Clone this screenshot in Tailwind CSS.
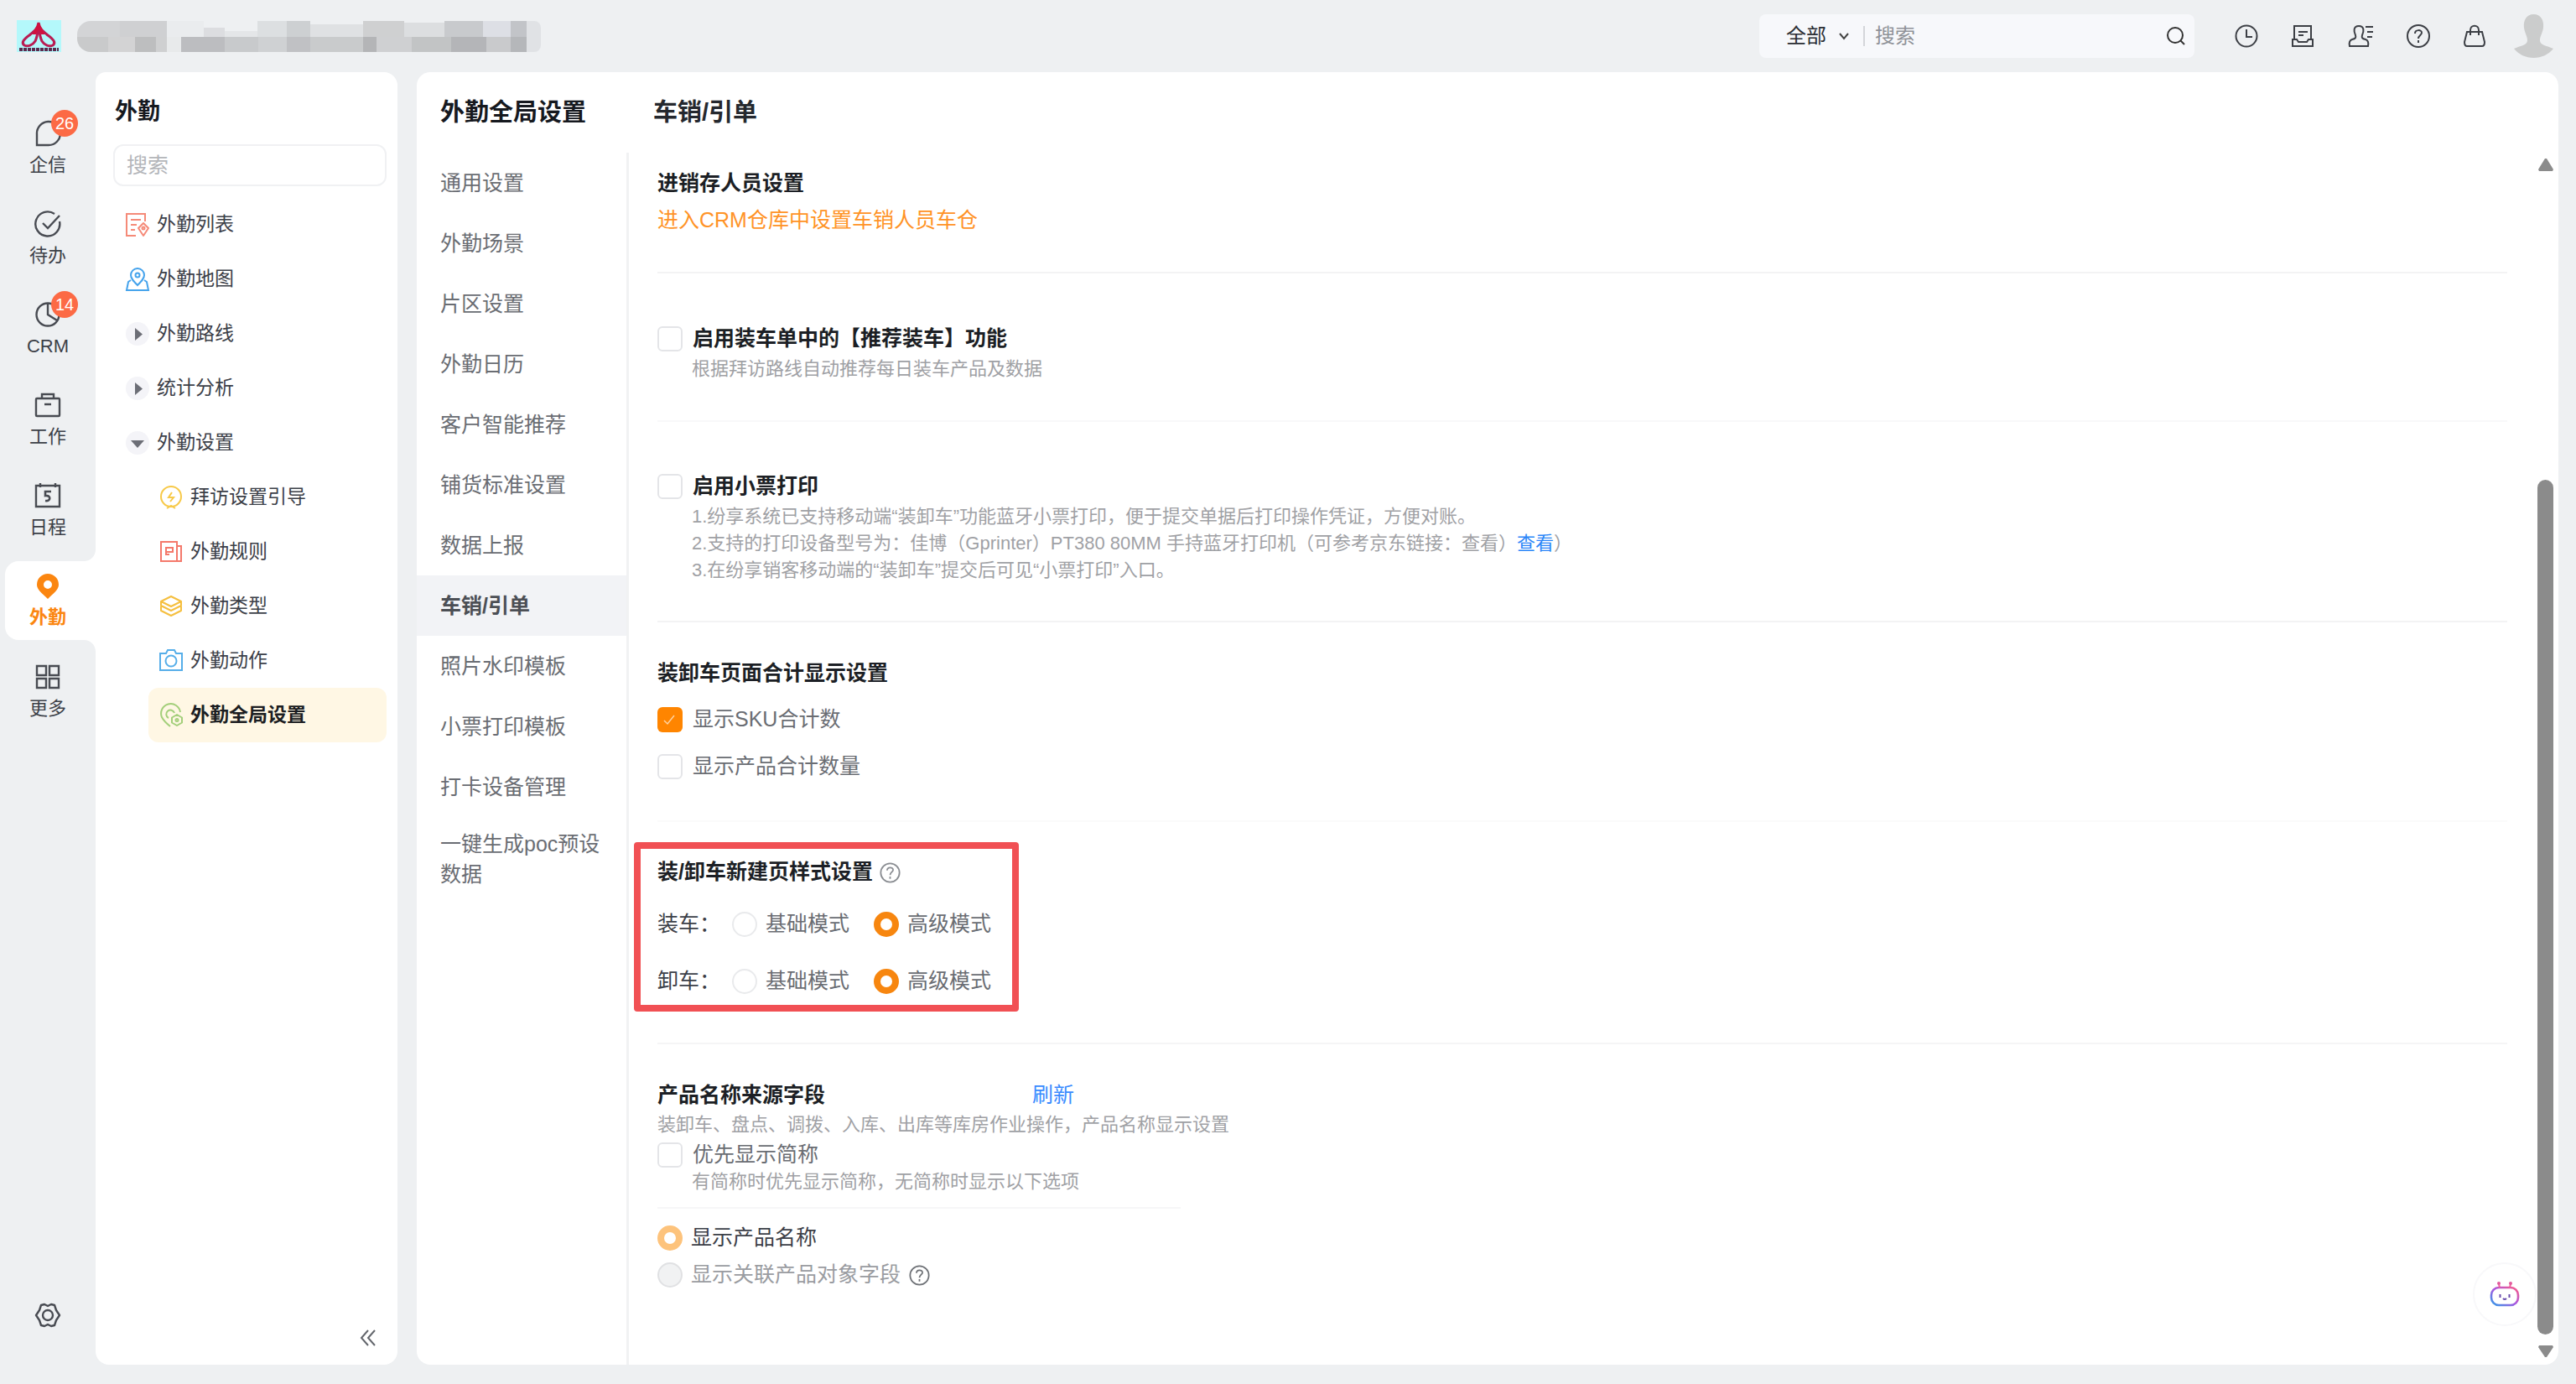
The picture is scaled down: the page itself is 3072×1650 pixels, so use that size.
<!doctype html>
<html lang="zh-CN">
    <head>
        <meta charset="UTF-8" />
        <meta name="viewport" content="width=device-width, initial-scale=1.0" />
        <title>外勤全局设置</title>
        <script src="https://cdn.jsdelivr.net/npm/@tailwindcss/browser@4"></script>
    </head>
    <body
        class="flex h-screen flex-col overflow-hidden bg-[#eef0f2] font-['Liberation_Sans','Noto_Sans_CJK_SC',sans-serif] text-[25px] text-[#3c4048]"
    >
        <!-- Top bar -->
        <header class="flex h-[86px] shrink-0 items-center pr-[27px] pl-5">
            <svg class="h-[38px] w-[53px]" viewBox="0 0 53 38">
                <rect width="53" height="38" fill="#b4f8fb" />
                <path
                    d="M26 3c-1 7-5 10-11 15-7 5-10 9-6 12 4 2 10 0 13-5 3-6 3-13 4-18 1 5 1 12 4 18 3 5 9 7 13 5 4-3 1-7-6-12C31 13 27 10 26 3z"
                    fill="none"
                    stroke="#b91c52"
                    stroke-width="3"
                />
                <path d="M26 3l-8 14h5l3-6 3 6h5z" fill="#d0123f" />
                <path d="M3 35h47" stroke="#5b2a4e" stroke-width="4" stroke-dasharray="4 1" />
            </svg>
            <!-- Masked company name -->
            <svg
                class="ml-[19px] h-[37px] w-[553px] rounded-lg rounded-l-2xl"
                viewBox="0 0 414 37"
                preserveAspectRatio="none"
                shape-rendering="crispEdges"
            >
                <path fill="#d3d4d6" d="M0 0h51v19H0z" />
                <path fill="#cfd0d2" d="M38 0h42v19H38z" />
                <path fill="#eaecee" d="M80 0h33v19H80z" />
                <path fill="#dcdde0" d="M113 8h19v11h-19z" />
                <path fill="#e4e6e8" d="M132 12h29v7h-29z" />
                <path fill="#dcdfe1" d="M161 0h26v19h-26z" />
                <path fill="#cdd0d2" d="M187 0h21v19h-21z" />
                <path fill="#dfe1e3" d="M208 4h47v15h-47z" />
                <path fill="#cfd0d1" d="M255 0h37v19h-37z" />
                <path fill="#dcdee0" d="M292 2h36v17h-36z" />
                <path fill="#c8cacd" d="M328 0h34v19h-34z" />
                <path fill="#dddfe5" d="M362 0h25v19h-25z" />
                <path fill="#c2c4c8" d="M387 0h14v19h-14z" />
                <path fill="#e0e2e5" d="M401 0h13v37h-13z" />
                <path fill="#c9cacb" d="M0 19h28v18H0z" />
                <path fill="#d3d3d4" d="M28 19h24v18H28z" />
                <path fill="#bdbebf" d="M52 19h18v18H52z" />
                <path fill="#cfd0d1" d="M70 19h10v18H70z" />
                <path fill="#e8eaeb" d="M80 19h13v18H80z" />
                <path fill="#bcbdc0" d="M93 19h39v18H93z" />
                <path fill="#c8cacc" d="M132 19h30v18h-30z" />
                <path fill="#cfd1d3" d="M162 19h25v18h-25z" />
                <path fill="#c0c1c4" d="M187 19h21v18h-21z" />
                <path fill="#c9cbcc" d="M208 19h47v18h-47z" />
                <path fill="#b4b5b7" d="M255 19h12v18h-12z" />
                <path fill="#cfd0d2" d="M267 19h32v18h-32z" />
                <path fill="#c2c4c5" d="M299 19h35v18h-35z" />
                <path fill="#b4b5b8" d="M334 19h31v18h-31z" />
                <path fill="#c9cacc" d="M365 19h22v18h-22z" />
                <path fill="#b5b7ba" d="M387 19h14v18h-14z" />
            </svg>

            <form class="ml-auto flex h-[52px] w-[519px] items-center rounded-lg bg-[#f7f8fb] pr-2 text-[24px]">
                <label class="relative flex items-center">
                    <select
                        aria-label="搜索范围"
                        class="w-[112px] appearance-none pl-8 text-[#2a2d33] outline-none"
                    >
                        <option>全部</option>
                    </select>
                    <svg class="absolute right-1 h-3.5 w-3.5" viewBox="0 0 14 14" fill="none" stroke="#444" stroke-width="2">
                        <path d="M2 4l5 6 5-6" />
                    </svg>
                </label>
                <span class="ml-3 h-6 w-0.5 bg-[#d4d6da]"></span>
                <input
                    type="text"
                    aria-label="全局搜索"
                    placeholder="搜索"
                    class="ml-3 min-w-0 flex-1 outline-none placeholder:text-[#8f9298]"
                />
                <button type="submit" aria-label="搜索" class="w-7">
                    <svg class="h-7 w-7" viewBox="0 0 28 28" fill="none" stroke="#333" stroke-width="2">
                        <circle cx="13" cy="13" r="9" />
                        <path d="M19 19l5 5" />
                    </svg>
                </button>
            </form>
            <nav class="ml-12 flex items-center gap-[39px]">
                <button aria-label="最近">
                    <svg class="h-7 w-7" viewBox="0 0 28 28" fill="none" stroke="#3c3f45" stroke-width="2">
                        <circle cx="14" cy="14" r="12.500" />
                        <path d="M14 6v9h7" />
                    </svg>
                </button>
                <button aria-label="文档">
                    <svg class="h-7 w-7" viewBox="0 0 28 28" fill="none" stroke="#3c3f45" stroke-width="2">
                        <path d="M4 18V2h20v16M9 9h11M9 13h6" />
                        <path d="M2 18h5l2 3h10l2-3h5v8H2z" />
                    </svg>
                </button>
                <button aria-label="联系人">
                    <svg class="h-7 w-8" viewBox="0 0 32 28" fill="none" stroke="#3c3f45" stroke-width="2">
                        <path
                            d="M10 13c-2-4-3-11 4-11s6 7 4 11c-1 3 0 4 4 5 3 1 4 3 3 8H3c-1-5 0-7 3-8 4-1 5-2 4-5z"
                        />
                        <path d="M22 3h9M24 9h7M24 15h6" />
                    </svg>
                </button>
                <button aria-label="帮助">
                    <svg class="h-7 w-7" viewBox="0 0 28 28" fill="none" stroke="#3c3f45" stroke-width="2">
                        <circle cx="14" cy="14" r="13" />
                        <path d="M10 11c0-5 8-5 8-1 0 3-4 3-4 7M14 19v3" />
                    </svg>
                </button>
                <button aria-label="应用市场">
                    <svg class="h-7 w-7" viewBox="0 0 28 28" fill="none" stroke="#3c3f45" stroke-width="2">
                        <path d="M5 9h18l3 12c0 4-1 5-3 5H5c-2 0-3-1-3-5z" />
                        <path d="M9 13V7c0-7 10-7 10 0v6" />
                    </svg>
                </button>
            </nav>
            <svg class="ml-[33px] h-[52px] w-[47px]" viewBox="0 0 47 52" fill="#cbcccc">
                <path
                    d="M23.500 0C32 0 36 7 35 16c-1 7-4 10-4 15 0 6 7 6 16 10-6 7-14 11-23.500 11S6 48 0 41c9-4 16-4 16-10 0-5-3-8-4-15C11 7 15 0 23.500 0z"
                />
            </svg>
        </header>

        <div class="flex min-h-0 flex-1 pr-[21px] pb-[23px]">
            <!-- Rail -->
            <nav class="flex w-[114px] shrink-0 flex-col pt-[45px] text-[22px] leading-7">
                <a href="#" class="flex h-[108px] flex-col items-center pt-3">
                    <span class="relative">
                        <svg class="h-8 w-8" viewBox="0 0 32 32" fill="none" stroke="#484b52" stroke-width="2.4">
                            <path d="M3 30V17A14 14 0 1 1 17 30z" />
                        </svg>
                        <span
                            class="absolute -top-3 left-5 flex h-8 w-8 items-center justify-center rounded-full bg-[#fc6a45] text-[20px] text-white"
                            >26</span
                        >
                    </span>
                    <span class="mt-2">企信</span>
                </a>
                <a href="#" class="flex h-[108px] flex-col items-center pt-3">
                    <svg class="h-8 w-8" viewBox="0 0 32 32" fill="none" stroke="#484b52" stroke-width="2.4">
                        <path d="M24 4A14.500 14.500 0 1 0 30 13M10 15l6 6L30 6" />
                    </svg>
                    <span class="mt-2">待办</span>
                </a>
                <a href="#" class="flex h-[108px] flex-col items-center pt-3">
                    <span class="relative">
                        <svg class="h-8 w-8" viewBox="0 0 32 32" fill="none" stroke="#484b52" stroke-width="2.4">
                            <circle cx="16" cy="16" r="13.500" />
                            <path d="M16 2v14l11 7" />
                        </svg>
                        <span
                            class="absolute -top-3 left-5 flex h-8 w-8 items-center justify-center rounded-full bg-[#fc6a45] text-[20px] text-white"
                            >14</span
                        >
                    </span>
                    <span class="mt-2">CRM</span>
                </a>
                <a href="#" class="flex h-[108px] flex-col items-center pt-3">
                    <svg class="h-8 w-8" viewBox="0 0 32 32" fill="none" stroke="#484b52" stroke-width="2.4">
                        <rect x="2" y="8" width="28" height="21" rx="1" />
                        <path d="M9 8V3h14v5M12 15h8" />
                    </svg>
                    <span class="mt-2">工作</span>
                </a>
                <a href="#" class="flex h-[106px] flex-col items-center pt-3">
                    <svg class="h-8 w-8" viewBox="0 0 32 32" fill="none" stroke="#484b52" stroke-width="2.4">
                        <path d="M2 4h28v25H2zM7 1v5M25 1v5" />
                        <path d="M20 11h-7v5c7-1 7 7 0 6" stroke-width="2.600" />
                    </svg>
                    <span class="mt-2">日程</span>
                </a>
                <a
                    href="#"
                    class="relative ml-1.5 flex h-[94px] flex-col items-center rounded-l-2xl bg-white pt-3.5 pr-1.5 font-bold text-[#fb8610]"
                >
                    <svg class="absolute right-0 bottom-full h-3.5 w-3.5" viewBox="0 0 14 14" fill="#fff">
                        <path d="M14 0v14H0c8 0 14-6 14-14z" />
                    </svg>
                    <svg class="absolute top-full right-0 h-3.5 w-3.5" viewBox="0 0 14 14" fill="#fff">
                        <path d="M14 14V0H0c8 0 14 6 14 14z" />
                    </svg>
                    <svg class="h-8 w-8" viewBox="0 0 32 32" fill="#fb8610">
                        <path
                            fill-rule="evenodd"
                            d="M16 1a13 13 0 0 1 13 13c0 6-6 10-13 17C9 24 3 20 3 14A13 13 0 0 1 16 1zm0 8a5 5 0 1 0 0 10 5 5 0 0 0 0-10z"
                        />
                    </svg>
                    <span class="mt-[7px]">外勤</span>
                </a>
                <a href="#" class="mt-4 flex flex-col items-center pt-3">
                    <svg class="h-8 w-8" viewBox="0 0 32 32" fill="none" stroke="#484b52" stroke-width="2.4">
                        <path d="M3 3h11v11H3zM18 3h11v11H18zM3 18h11v11H3zM18 18h11v11H18z" />
                    </svg>
                    <span class="mt-2">更多</span>
                </a>
                <button aria-label="设置" class="mt-auto mb-[43px] self-center">
                    <svg class="h-8 w-8" viewBox="0 0 32 32" fill="none" stroke="#484b52" stroke-width="2.4">
                        <path
                            d="M2 16l4-6 2-6 4-1 4 2 4-2 4 1 2 6 4 6-4 6-2 6-4 1-4-2-4 2-4-1-2-6z"
                            stroke-linejoin="round"
                        />
                        <circle cx="16" cy="16" r="6" />
                    </svg>
                </button>
            </nav>

            <!-- Module tree -->
            <aside class="flex w-[360px] shrink-0 flex-col rounded-2xl rounded-tl-xl bg-white px-[13px] pt-[26px] pl-[21px]">
                <h2 class="pl-0.5 text-[27px] leading-[42px] font-bold text-[#16191f]">外勤</h2>
                <input
                    type="text"
                    aria-label="搜索菜单"
                    placeholder="搜索"
                    class="mt-[18px] h-[50px] w-full rounded-xl border-2 border-[#f0f1f3] px-3.5 outline-none placeholder:text-[#b4b6ba]"
                />
                <ul class="mt-[13px] text-[23px]">
                    <li>
                        <a href="#" class="flex h-[65px] items-center gap-2 pl-3.5">
                            <svg class="h-[30px] w-[30px]" viewBox="0 0 30 30" fill="none" stroke="#f58a78" stroke-width="2">
                                <path d="M13 28H2V2h22v9M7 9h12M7 15h7M7 21h5" />
                                <path d="M22 13l6 6-6 9-6-9z" stroke-linejoin="round" />
                                <circle cx="22" cy="19" r="1.500" />
                            </svg>
                            外勤列表
                        </a>
                    </li>
                    <li>
                        <a href="#" class="flex h-[65px] items-center gap-2 pl-3.5">
                            <svg class="h-[30px] w-[30px]" viewBox="0 0 30 30" fill="none" stroke="#45a3ec" stroke-width="2">
                                <path d="M15 22c-5-5-8-8-8-12a8 8 0 0 1 16 0c0 4-3 7-8 12z" />
                                <circle cx="15" cy="10" r="2.500" />
                                <path d="M7 16l-3 2-2 10h26l-2-10-3-2" />
                            </svg>
                            外勤地图
                        </a>
                    </li>
                    <li>
                        <a href="#" class="flex h-[65px] items-center gap-2 pl-3.5">
                            <svg class="h-[30px] w-[30px]" viewBox="0 0 30 30">
                                <circle cx="15" cy="15" r="14" fill="#f4f4f8" />
                                <path d="M12 8v15l9-7.500z" fill="#6c6e76" />
                            </svg>
                            外勤路线
                        </a>
                    </li>
                    <li>
                        <a href="#" class="flex h-[65px] items-center gap-2 pl-3.5">
                            <svg class="h-[30px] w-[30px]" viewBox="0 0 30 30">
                                <circle cx="15" cy="15" r="14" fill="#f4f4f8" />
                                <path d="M12 8v15l9-7.500z" fill="#6c6e76" />
                            </svg>
                            统计分析
                        </a>
                    </li>
                    <li>
                        <a href="#" class="flex h-[65px] items-center gap-2 pl-3.5">
                            <svg class="h-[30px] w-[30px]" viewBox="0 0 30 30">
                                <circle cx="15" cy="15" r="14" fill="#f4f4f8" />
                                <path d="M7 12h16l-8 9z" fill="#6c6e76" />
                            </svg>
                            外勤设置
                        </a>
                        <ul class="pl-[42px]">
                            <li>
                                <a href="#" class="flex h-[65px] items-center gap-2 pl-3">
                                    <svg class="h-[30px] w-[30px]" viewBox="0 0 30 30" fill="none" stroke="#f7c948" stroke-width="2">
                                        <circle cx="15" cy="14" r="12" />
                                        <path d="M16 9l-4 6h6l-4 5M10 28l5-3 5 3" />
                                    </svg>
                                    拜访设置引导
                                </a>
                            </li>
                            <li>
                                <a href="#" class="flex h-[65px] items-center gap-2 pl-3">
                                    <svg class="h-[30px] w-[30px]" viewBox="0 0 30 30" fill="none" stroke="#f4796b" stroke-width="2">
                                        <path d="M3 3h19v23H3zM22 8h5v18h-5M9 10h8v5H9M9 18h4M9 9v10" />
                                    </svg>
                                    外勤规则
                                </a>
                            </li>
                            <li>
                                <a href="#" class="flex h-[65px] items-center gap-2 pl-3">
                                    <svg class="h-[30px] w-[30px]" viewBox="0 0 30 30" fill="none" stroke="#f5bf3f" stroke-width="2">
                                        <path d="M15 3l12 6-12 6L3 9zM3 9v5l12 6 12-6V9M3 15v5l12 6 12-6v-5" stroke-linejoin="round" />
                                    </svg>
                                    外勤类型
                                </a>
                            </li>
                            <li>
                                <a href="#" class="flex h-[65px] items-center gap-2 pl-3">
                                    <svg class="h-[30px] w-[30px]" viewBox="0 0 30 30" fill="none" stroke="#56aee9" stroke-width="2">
                                        <path d="M2 6h7l2-4h8l2 4h7v20H2z" />
                                        <circle cx="15" cy="15" r="6.500" />
                                    </svg>
                                    外勤动作
                                </a>
                            </li>
                            <li>
                                <a
                                    href="#"
                                    class="flex h-[65px] items-center gap-2 rounded-xl bg-[#fff7e4] pl-3 font-bold text-[#1c1e22]"
                                >
                                    <svg class="h-[30px] w-[30px]" viewBox="0 0 30 30" fill="none" stroke="#a3cf7a" stroke-width="2">
                                        <path d="M26 11A11.500 11.500 0 1 0 4 17c2 4 5 7 10 11" />
                                        <path d="M19 12a5 5 0 1 0-7 6" />
                                        <path d="M22 14l6 3.500v6L22 27l-6-3.500v-6z" stroke-linejoin="round" />
                                        <circle cx="22" cy="20.500" r="1.500" />
                                    </svg>
                                    外勤全局设置
                                </a>
                            </li>
                        </ul>
                    </li>
                </ul>
                <button aria-label="收起" class="mt-auto mr-3 mb-[22px] self-end">
                    <svg class="h-5 w-5" viewBox="0 0 20 20" fill="none" stroke="#63666c" stroke-width="2">
                        <path d="M10 1l-8 9 8 9M18 1l-8 9 8 9" />
                    </svg>
                </button>
            </aside>

            <!-- Settings panel -->
            <main class="relative ml-[23px] flex min-w-0 flex-1 flex-col rounded-2xl bg-white">
                <div class="flex h-24 shrink-0 items-center pt-0.5 text-[29px] font-bold text-[#16191f]">
                    <h1 class="w-[254px] pl-7">外勤全局设置</h1>
                    <h2 class="pl-7 text-[#25282e]">车销/引单</h2>
                </div>

                <div class="flex min-h-0 flex-1">
                    <nav class="w-[253px] shrink-0 border-r-3 border-[#f1f2f3] leading-9 text-[#6a6d73]">
                        <a href="#" class="flex h-[72px] items-center pl-7">通用设置</a>
                        <a href="#" class="flex h-[72px] items-center pl-7">外勤场景</a>
                        <a href="#" class="flex h-[72px] items-center pl-7">片区设置</a>
                        <a href="#" class="flex h-[72px] items-center pl-7">外勤日历</a>
                        <a href="#" class="flex h-[72px] items-center pl-7">客户智能推荐</a>
                        <a href="#" class="flex h-[72px] items-center pl-7">铺货标准设置</a>
                        <a href="#" class="flex h-[72px] items-center pl-7">数据上报</a>
                        <a
                            href="#"
                            class="flex h-[72px] items-center bg-[#f2f3f6] pl-7 font-bold text-[#4c4f55]"
                            >车销/引单</a
                        >
                        <a href="#" class="flex h-[72px] items-center pl-7">照片水印模板</a>
                        <a href="#" class="flex h-[72px] items-center pl-7">小票打印模板</a>
                        <a href="#" class="flex h-[72px] items-center pl-7">打卡设备管理</a>
                        <a href="#" class="block py-3.5 pr-5 pl-7">一键生成poc预设数据</a>
                    </nav>

                    <div class="min-w-0 flex-1 pr-9 pl-[34px]">
                        <section class="border-b-2 border-[#f3f3f4] pt-3.5 pb-10 leading-[44px]">
                            <h3 class="font-bold text-[#1c1f25]">进销存人员设置</h3>
                            <a href="#" class="block text-[#ff9326]">进入CRM仓库中设置车销人员车仓</a>
                        </section>

                        <section class="border-b-2 border-[#f8f8f9] pt-[58px] pb-[45px]">
                            <div class="flex h-10 items-center gap-3">
                                <input
                                    id="recommend"
                                    type="checkbox"
                                    class="h-[30px] w-[30px] appearance-none rounded-md border-2 border-[#e4e5e8]"
                                />
                                <label for="recommend" class="font-bold text-[#1c1f25]">启用装车单中的【推荐装车】功能</label>
                            </div>
                            <p class="pl-[41px] text-[22px] leading-8 text-[#9fa1a5]">
                                根据拜访路线自动推荐每日装车产品及数据
                            </p>
                        </section>

                        <section class="border-b-2 border-[#f3f3f4] pt-[57px] pb-11">
                            <div class="flex h-10 items-center gap-3">
                                <input
                                    id="receipt"
                                    type="checkbox"
                                    class="h-[30px] w-[30px] appearance-none rounded-md border-2 border-[#e4e5e8]"
                                />
                                <label for="receipt" class="font-bold text-[#1c1f25]">启用小票打印</label>
                            </div>
                            <div class="pl-[41px] text-[22px] leading-8 text-[#9fa1a5]">
                                <p>1.纷享系统已支持移动端“装卸车”功能蓝牙小票打印，便于提交单据后打印操作凭证，方便对账。</p>
                                <p>
                                    2.支持的打印设备型号为：佳博（Gprinter）PT380 80MM 手持蓝牙打印机（可参考京东链接：查看）<a
                                        href="#"
                                        class="text-[#2b86f8]"
                                        >查看</a
                                    >）
                                </p>
                                <p>3.在纷享销客移动端的“装卸车”提交后可见“小票打印”入口。</p>
                            </div>
                        </section>

                        <section class="border-b-2 border-[#fbfbfb] pt-10 pb-9">
                            <h3 class="mb-2 leading-10 font-bold text-[#1c1f25]">装卸车页面合计显示设置</h3>
                            <div class="flex h-14 items-center gap-3 text-[#6a6d73]">
                                <span class="relative flex">
                                    <input
                                        id="sku"
                                        type="checkbox"
                                        checked
                                        class="h-[30px] w-[30px] appearance-none rounded-md bg-[#ff8500]"
                                    />
                                    <svg
                                        class="pointer-events-none absolute inset-0"
                                        viewBox="0 0 30 30"
                                        fill="none"
                                        stroke="#ffd3a1"
                                        stroke-width="1.500"
                                    >
                                        <path d="M8 16l4 4 8-10" />
                                    </svg>
                                </span>
                                <label for="sku">显示SKU合计数</label>
                            </div>
                            <div class="flex h-14 items-center gap-3 text-[#6a6d73]">
                                <input
                                    id="quantity"
                                    type="checkbox"
                                    class="h-[30px] w-[30px] appearance-none rounded-md border-2 border-[#e4e5e8]"
                                />
                                <label for="quantity">显示产品合计数量</label>
                            </div>
                        </section>

                        <section class="border-b-2 border-[#f5f5f6] pt-6 pb-[37px]">
                            <div class="-ml-7 w-[459px] rounded border-8 border-[#f15054] pt-2 pb-2 pl-5">
                                <h3 class="mb-[22px] flex h-10 items-center gap-2 font-bold text-[#1c1f25]">
                                    装/卸车新建页样式设置
                                    <svg class="h-[25px] w-[25px]" viewBox="0 0 28 28" fill="none" stroke="#8a8d92" stroke-width="2">
                                        <circle cx="14" cy="14" r="12.500" />
                                        <path d="M10 11c0-5 8-5 8-1 0 3-4 3-4 7M14 19v3" />
                                    </svg>
                                </h3>
                                <div class="mb-7 flex h-10 items-center" role="radiogroup" aria-label="装车">
                                    <span class="w-[89px]">装车：</span>
                                    <label class="flex items-center gap-2.5 text-[#6a6d73]">
                                        <input
                                            type="radio"
                                            name="load"
                                            class="h-[30px] w-[30px] appearance-none rounded-full border-2 border-[#e9eaec]"
                                        />
                                        基础模式
                                    </label>
                                    <label class="ml-[29px] flex items-center gap-2.5 text-[#6a6d73]">
                                        <input
                                            type="radio"
                                            name="load"
                                            checked
                                            class="h-[30px] w-[30px] appearance-none rounded-full border-8 border-[#f7860f]"
                                        />
                                        高级模式
                                    </label>
                                </div>
                                <div class="flex h-10 items-center" role="radiogroup" aria-label="卸车">
                                    <span class="w-[89px]">卸车：</span>
                                    <label class="flex items-center gap-2.5 text-[#6a6d73]">
                                        <input
                                            type="radio"
                                            name="unload"
                                            class="h-[30px] w-[30px] appearance-none rounded-full border-2 border-[#e9eaec]"
                                        />
                                        基础模式
                                    </label>
                                    <label class="ml-[29px] flex items-center gap-2.5 text-[#6a6d73]">
                                        <input
                                            type="radio"
                                            name="unload"
                                            checked
                                            class="h-[30px] w-[30px] appearance-none rounded-full border-8 border-[#f7860f]"
                                        />
                                        高级模式
                                    </label>
                                </div>
                            </div>
                        </section>

                        <section class="pt-10">
                            <div class="flex leading-10">
                                <h3 class="w-[447px] font-bold text-[#1c1f25]">产品名称来源字段</h3>
                                <button class="text-[#3a8bff]">刷新</button>
                            </div>
                            <p class="text-[22px] leading-8 text-[#9fa1a5]">
                                装卸车、盘点、调拨、入库、出库等库房作业操作，产品名称显示设置
                            </p>
                            <div class="w-[624px] border-b-2 border-[#f6f6f7] pb-[18px]">
                                <div class="flex h-10 items-center gap-3 text-[#6a6d73]">
                                    <input
                                        id="short-name"
                                        type="checkbox"
                                        class="h-[30px] w-[30px] appearance-none rounded-md border-2 border-[#e4e5e8]"
                                    />
                                    <label for="short-name">优先显示简称</label>
                                </div>
                                <p class="pl-[41px] text-[22px] leading-6 text-[#9fa1a5]">
                                    有简称时优先显示简称，无简称时显示以下选项
                                </p>
                            </div>
                            <div class="pt-[13px]">
                                <label class="flex h-11 items-center gap-2.5">
                                    <input
                                        type="radio"
                                        name="name-source"
                                        checked
                                        disabled
                                        class="h-[30px] w-[30px] appearance-none rounded-full border-8 border-[#fdc37c]"
                                    />
                                    显示产品名称
                                </label>
                                <label class="flex h-11 items-center gap-2.5 text-[#9a9ca1]">
                                    <input
                                        type="radio"
                                        name="name-source"
                                        disabled
                                        class="h-[30px] w-[30px] appearance-none rounded-full border-2 border-[#e0e1e3] bg-[#f1f2f3]"
                                    />
                                    显示关联产品对象字段
                                    <svg class="h-[25px] w-[25px]" viewBox="0 0 28 28" fill="none" stroke="#6f7277" stroke-width="2">
                                        <circle cx="14" cy="14" r="12.500" />
                                        <path d="M10 11c0-5 8-5 8-1 0 3-4 3-4 7M14 19v3" />
                                    </svg>
                                </label>
                            </div>
                        </section>
                    </div>

                    <!-- Scrollbar -->
                    <div class="mr-[6px] flex w-[19px] shrink-0 flex-col items-center pt-1.5 pb-2">
                        <svg class="h-4 w-5" viewBox="0 0 20 16" fill="#8b8b8b">
                            <path d="M9 1h2l8 13-1 2H2l-1-2z" />
                        </svg>
                        <div class="mb-3 flex w-full flex-1 flex-col pt-0.5">
                            <div class="flex-[366]"></div>
                            <div class="flex-[1019] rounded-full bg-[#8b8b8b]"></div>
                        </div>
                        <svg class="h-4 w-5" viewBox="0 0 20 16" fill="#8b8b8b">
                            <path d="M9 15h2l8-12-1-2H2L1 3z" />
                        </svg>
                    </div>
                </div>

                <!-- Assistant -->
                <button
                    aria-label="智能助手"
                    class="absolute right-[26px] bottom-[46px] flex h-[76px] w-[76px] items-center justify-center rounded-full border-2 border-[#f8f8fa] bg-white"
                >
                    <svg class="h-8 w-9" viewBox="0 0 36 32" fill="none" stroke-width="2.600">
                        <defs>
                            <linearGradient id="bot" x1="0" y1="1" x2="1" y2="0">
                                <stop offset="0" stop-color="#2f9be8" />
                                <stop offset="0.500" stop-color="#a857e0" />
                                <stop offset="1" stop-color="#fb5a86" />
                            </linearGradient>
                        </defs>
                        <rect x="2" y="8" width="32" height="21" rx="9" stroke="url(#bot)" />
                        <path d="M12 8l-1-4M24 8l1-4" stroke="#f0609c" stroke-width="2" />
                        <circle cx="11" cy="3" r="2" fill="#e35a9c" />
                        <circle cx="25" cy="3" r="2" fill="#e35a9c" />
                        <path d="M12.500 16v4M23.500 16v4M16 21q2 2 4 0" stroke="#6b4fae" stroke-width="2" />
                    </svg>
                </button>
            </main>
        </div>
    </body>
</html>
